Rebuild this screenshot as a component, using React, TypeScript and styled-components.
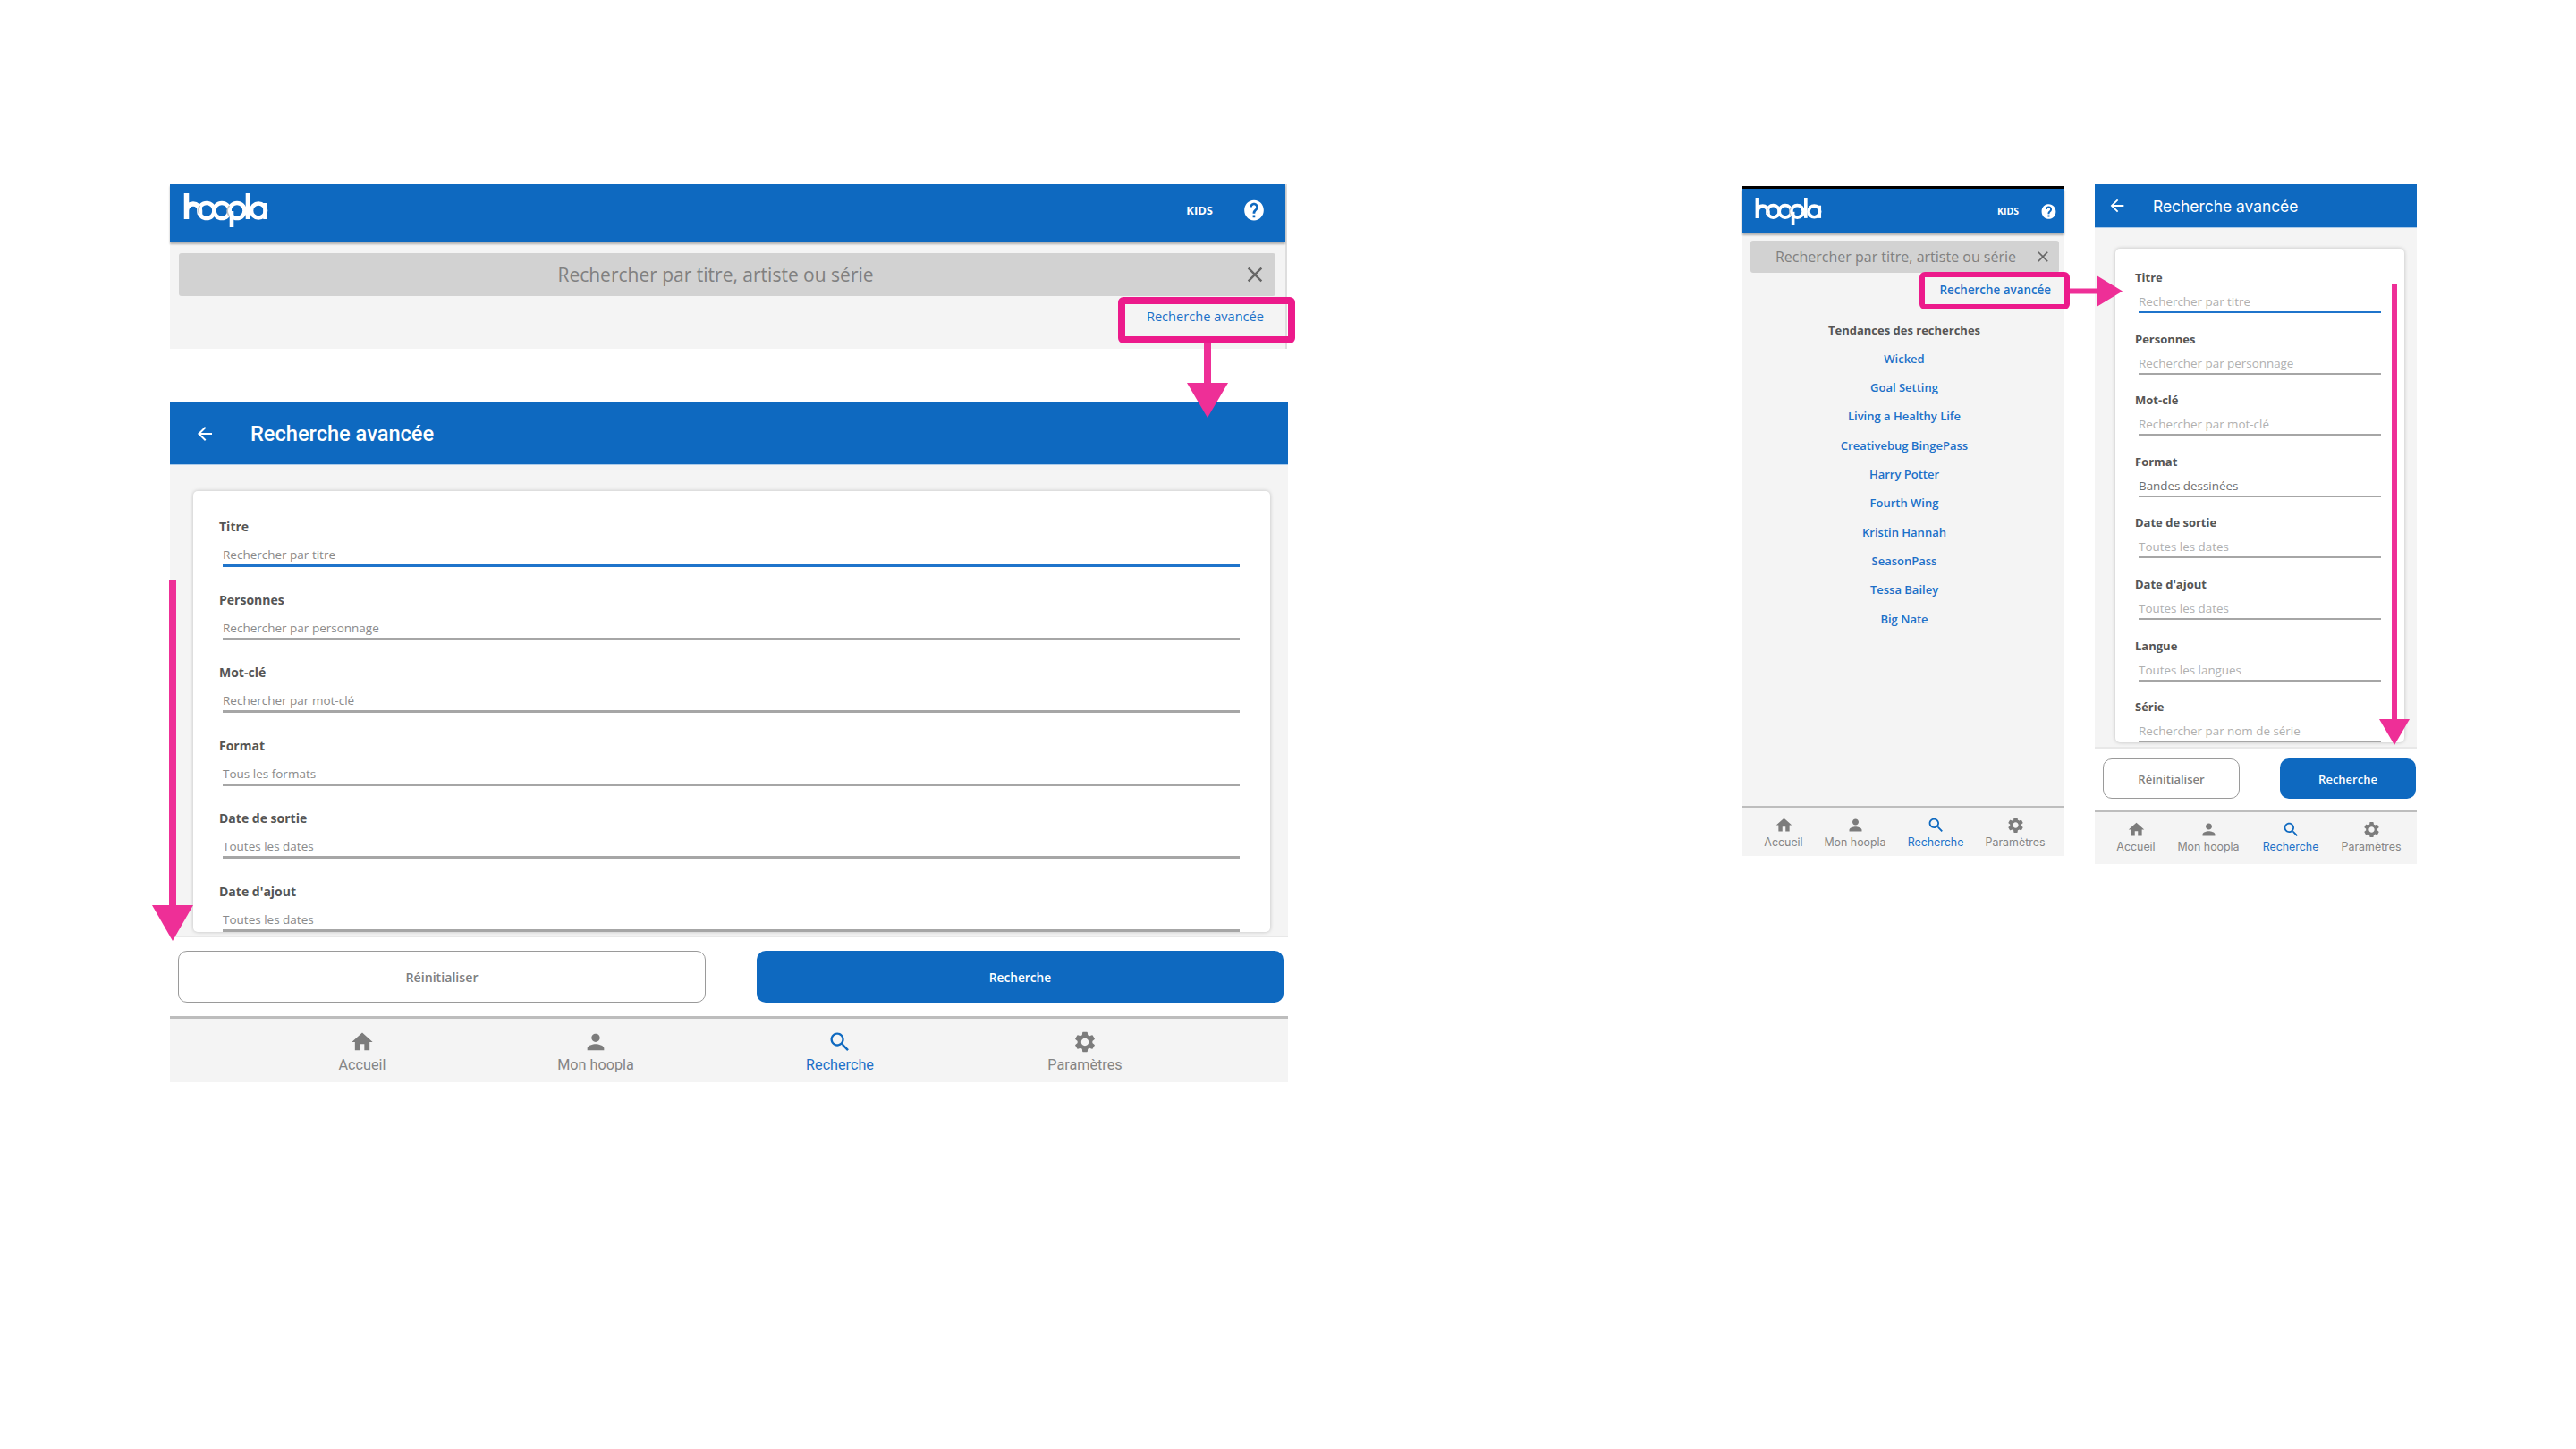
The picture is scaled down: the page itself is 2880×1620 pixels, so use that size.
import React from "react";
import styled, { createGlobalStyle } from "styled-components";

const BLUE = "#0e69c0";
const LINK = "#1c70c8";
const PANEL = "#f4f4f4";
const PINK = "#ee2f97";

const Global = createGlobalStyle`
  html, body { margin: 0; padding: 0; background: #fff; }
  * { box-sizing: border-box; }
`;

const Page = styled.div`
  position: relative;
  width: 2880px;
  height: 1620px;
  overflow: hidden;
  background: #fff;
  padding: 206px 0 0 190px;
  display: flex;
  align-items: flex-start;
  font-family: "Open Sans", "Noto Sans", sans-serif;
`;

const TabletColumn = styled.div`
  width: 1250px;
  display: flex;
  flex-direction: column;
  gap: 60px;
`;

const PhoneGroup = styled.div`
  margin-left: 508px;
  display: flex;
  gap: 34px;
  align-items: flex-start;
`;

/* search screen */
const SearchScreen = styled.section<{ $phone?: boolean }>`
  display: flex;
  flex-direction: column;
  background: ${PANEL};
  width: ${(p) => (p.$phone ? "360px" : "1249px")};
  height: ${(p) => (p.$phone ? "749px" : "184px")};
  margin-top: ${(p) => (p.$phone ? "2px" : "0")};
  border-top: ${(p) => (p.$phone ? "3px solid #000" : "0")};
  border-right: ${(p) => (p.$phone ? "0" : "2px solid #dedede")};
`;

const AppBar = styled.header<{ $phone?: boolean }>`
  display: flex;
  align-items: center;
  flex: none;
  background: ${BLUE};
  height: ${(p) => (p.$phone ? "50px" : "65px")};
  padding: ${(p) => (p.$phone ? "0 8px 0 14px" : "0 22px 8px 15px")};
  box-shadow: 0 2px 2px rgba(0, 0, 0, 0.28);
`;

const Kids = styled.span<{ $phone?: boolean }>`
  margin-left: auto;
  color: #fff;
  font-weight: 700;
  font-size: ${(p) => (p.$phone ? "10.5px" : "13px")};
  margin-right: ${(p) => (p.$phone ? "24px" : "33px")};
`;

const SearchField = styled.div<{ $phone?: boolean }>`
  display: flex;
  align-items: center;
  justify-content: center;
  flex: none;
  background: #d2d2d2;
  color: #808080;
  border-radius: 3px;
  height: ${(p) => (p.$phone ? "36px" : "48px")};
  margin: ${(p) => (p.$phone ? "8px 6px 0 9px" : "12px 11px 0 10px")};
  padding-right: ${(p) => (p.$phone ? "20px" : "26px")};
  position: relative;
  font-size: ${(p) => (p.$phone ? "16px" : "21px")};
`;

const ClearIcon = styled.svg<{ $phone?: boolean }>`
  position: absolute;
  top: 50%;
  transform: translateY(-50%);
  right: ${(p) => (p.$phone ? "8px" : "9px")};
  width: ${(p) => (p.$phone ? "20px" : "28px")};
  height: ${(p) => (p.$phone ? "20px" : "28px")};
  fill: #666;
`;

const AdvancedLink = styled.a<{ $phone?: boolean }>`
  align-self: flex-end;
  color: ${LINK};
  font-weight: ${(p) => (p.$phone ? 600 : 400)};
  font-size: ${(p) => (p.$phone ? "13.4px" : "14.6px")};
  line-height: 20px;
  margin-top: ${(p) => (p.$phone ? "9px" : "12px")};
  margin-right: ${(p) => (p.$phone ? "15px" : "24px")};
`;

const Trending = styled.div`
  flex: 1;
  display: flex;
  flex-direction: column;
  align-items: center;
  padding: 24.5px 0 0 2px;
`;

const TrendingTitle = styled.h3`
  margin: 0;
  font-size: 13px;
  line-height: 20px;
  font-weight: 700;
  color: #555;
`;

const TrendingLink = styled.a`
  color: ${LINK};
  font-weight: 600;
  font-size: 13px;
  line-height: 20px;
  margin-top: 12.33px;
`;

/* advanced screen */
const AdvancedScreen = styled.section<{ $phone?: boolean }>`
  display: flex;
  flex-direction: column;
  background: ${PANEL};
  height: 760px;
  width: ${(p) => (p.$phone ? "360px" : "1250px")};
`;

const TitleBar = styled.header<{ $phone?: boolean }>`
  display: flex;
  align-items: center;
  flex: none;
  background: ${BLUE};
  color: #fff;
  height: ${(p) => (p.$phone ? "49px" : "70px")};
  padding-left: ${(p) => (p.$phone ? "14px" : "27px")};
  gap: ${(p) => (p.$phone ? "29px" : "39px")};
  border-bottom: 1px solid #a9c9e8;
`;

const BackIcon = styled.svg<{ $phone?: boolean }>`
  flex: none;
  fill: #fff;
  width: ${(p) => (p.$phone ? "22px" : "24px")};
  height: ${(p) => (p.$phone ? "22px" : "24px")};
`;

const Title = styled.h2<{ $phone?: boolean }>`
  margin: 0;
  font-family: ${(p) => (p.$phone ? "Inter" : "Roboto")}, sans-serif;
  font-weight: ${(p) => (p.$phone ? 400 : 500)};
  font-size: ${(p) => (p.$phone ? "17.4px" : "23.6px")};
`;

const ScrollArea = styled.div<{ $phone?: boolean }>`
  flex: 1;
  min-height: 0;
  overflow: hidden;
  padding: ${(p) => (p.$phone ? "23px 14px 0 23px" : "29px 20px 0 26px")};
`;

const Card = styled.div<{ $phone?: boolean }>`
  background: #fff;
  border-radius: 5px;
  box-shadow: 0 0 4px rgba(0, 0, 0, 0.22);
  display: flex;
  flex-direction: column;
  padding: ${(p) => (p.$phone ? "24px 26px 0 22px" : "30px 34px 0 29px")};
  gap: ${(p) => (p.$phone ? "20.6px" : "26.55px")};
`;

const FieldLabel = styled.label<{ $phone?: boolean }>`
  display: block;
  font-weight: 700;
  color: #555;
  font-size: ${(p) => (p.$phone ? "13px" : "14px")};
  line-height: ${(p) => (p.$phone ? "16px" : "20px")};
`;

const FieldValue = styled.div<{ $phone?: boolean; $active?: boolean; $filled?: boolean }>`
  margin-left: 4px;
  margin-top: ${(p) => (p.$phone ? "9px" : "10px")};
  height: ${(p) => (p.$phone ? "23px" : "25px")};
  line-height: ${(p) => (p.$phone ? "21px" : "22px")};
  font-size: ${(p) => (p.$phone ? "13.4px" : "13.5px")};
  color: ${(p) => (p.$filled ? "#6e6e6e" : p.$phone ? "#b0b0b0" : "#8a8a8a")};
  border-bottom: ${(p) => (p.$phone ? "2px" : "3px")} solid
    ${(p) => (p.$active ? "#1f74cb" : "#a6a6a6")};
`;

const Footer = styled.div<{ $phone?: boolean }>`
  flex: none;
  display: flex;
  background: #fff;
  border-top: 2px solid #e8e8e8;
  height: ${(p) => (p.$phone ? "71px" : "90px")};
  padding: ${(p) => (p.$phone ? "11px 1px 0 9px" : "15px 5px 0 9px")};
  justify-content: space-between;
`;

const ResetButton = styled.button<{ $phone?: boolean }>`
  font-family: inherit;
  background: #fff;
  color: #808080;
  font-weight: 600;
  font-size: ${(p) => (p.$phone ? "13px" : "14.2px")};
  border: 1.5px solid #9a9a9a;
  border-radius: 10px;
  height: ${(p) => (p.$phone ? "45px" : "58px")};
  width: ${(p) => (p.$phone ? "153px" : "590px")};
`;

const SubmitButton = styled.button<{ $phone?: boolean }>`
  font-family: inherit;
  background: ${BLUE};
  color: #fff;
  font-weight: 600;
  font-size: ${(p) => (p.$phone ? "13px" : "13.7px")};
  border: 0;
  border-radius: 10px;
  height: ${(p) => (p.$phone ? "45px" : "58px")};
  width: ${(p) => (p.$phone ? "152px" : "589px")};
`;

/* bottom nav */
const BottomNav = styled.nav<{ $tracks: string; $phone?: boolean; $height: number; $pad: number }>`
  flex: none;
  display: grid;
  grid-template-columns: ${(p) => p.$tracks};
  background: ${PANEL};
  border-top: ${(p) => (p.$phone ? "2px" : "3px")} solid #bdbdbd;
  height: ${(p) => p.$height}px;
  padding-left: ${(p) => p.$pad}px;
`;

const NavItem = styled.div<{ $active?: boolean; $phone?: boolean }>`
  display: flex;
  flex-direction: column;
  align-items: center;
  white-space: nowrap;
  color: ${(p) => (p.$active ? LINK : "#858585")};
  padding-top: ${(p) => (p.$phone ? "9px" : "12px")};
  font-family: ${(p) => (p.$phone ? "Inter" : "Roboto")}, sans-serif;
  font-size: ${(p) => (p.$phone ? "12.4px" : "16.2px")};
  line-height: ${(p) => (p.$phone ? "18px" : "23px")};
`;

const NavIcon = styled.svg<{ $active?: boolean; $phone?: boolean }>`
  fill: ${(p) => (p.$active ? BLUE : "#7c7c7c")};
  width: ${(p) => (p.$phone ? "21px" : "28px")};
  height: ${(p) => (p.$phone ? "21px" : "28px")};
  flex: none;
`;

/* annotations */
const Highlight = styled.div<{ $x: number; $y: number; $w: number; $h: number; $b: number }>`
  position: absolute;
  left: ${(p) => p.$x}px;
  top: ${(p) => p.$y}px;
  width: ${(p) => p.$w}px;
  height: ${(p) => p.$h}px;
  border: ${(p) => p.$b}px solid #ec1a8b;
  border-radius: 6px;
`;

const ArrowSvg = styled.svg<{ $x: number; $y: number }>`
  position: absolute;
  left: ${(p) => p.$x}px;
  top: ${(p) => p.$y}px;
  fill: ${PINK};
`;

const DownArrow = ({ x, y, w, h, shaft, head }: { x: number; y: number; w: number; h: number; shaft: number; head: number }) => (
  <ArrowSvg $x={x} $y={y} width={w} height={h} viewBox={`0 0 ${w} ${h}`}>
    <rect x={(w - shaft) / 2} y={0} width={shaft} height={h - head + 1} />
    <polygon points={`0,${h - head} ${w},${h - head} ${w / 2},${h}`} />
  </ArrowSvg>
);

const RightArrow = ({ x, y, w, h, shaft, head }: { x: number; y: number; w: number; h: number; shaft: number; head: number }) => (
  <ArrowSvg $x={x} $y={y} width={w} height={h} viewBox={`0 0 ${w} ${h}`}>
    <rect x={0} y={(h - shaft) / 2} width={w - head + 1} height={shaft} />
    <polygon points={`${w - head},0 ${w - head},${h} ${w},${h / 2}`} />
  </ArrowSvg>
);

/* icons */
const P = {
  home: "M10 20v-6h4v6h5v-8h3L12 3 2 12h3v8z",
  person: "M12 12c2.21 0 4-1.79 4-4s-1.79-4-4-4-4 1.79-4 4 1.79 4 4 4zm0 2c-2.67 0-8 1.34-8 4v2h16v-2c0-2.66-5.33-4-8-4z",
  search: "M15.5 14h-.79l-.28-.27C15.41 12.59 16 11.11 16 9.5 16 5.91 13.09 3 9.5 3S3 5.91 3 9.5 5.91 16 9.5 16c1.61 0 3.09-.59 4.23-1.57l.27.28v.79l5 4.99L20.49 19l-4.99-5zm-6 0C7.01 14 5 11.99 5 9.5S7.01 5 9.5 5 14 7.01 14 9.5 11.99 14 9.5 14z",
  settings: "M19.14 12.94c.04-.3.06-.61.06-.94 0-.32-.02-.64-.07-.94l2.03-1.58a.49.49 0 0 0 .12-.61l-1.92-3.32a.488.488 0 0 0-.59-.22l-2.39.96c-.5-.38-1.03-.7-1.62-.94l-.36-2.54a.484.484 0 0 0-.48-.41h-3.84c-.24 0-.43.17-.47.41l-.36 2.54c-.59.24-1.13.57-1.62.94l-2.39-.96c-.22-.08-.47 0-.59.22L2.74 8.87c-.12.21-.08.47.12.61l2.03 1.58c-.05.3-.09.63-.09.94s.02.64.07.94l-2.03 1.58a.49.49 0 0 0-.12.61l1.92 3.32c.12.22.37.29.59.22l2.39-.96c.5.38 1.03.7 1.62.94l.36 2.54c.05.24.24.41.48.41h3.84c.24 0 .44-.17.47-.41l.36-2.54c.59-.24 1.13-.56 1.62-.94l2.39.96c.22.08.47 0 .59-.22l1.92-3.32c.12-.22.07-.47-.12-.61l-2.01-1.58zM12 15.6c-1.98 0-3.6-1.62-3.6-3.6s1.62-3.6 3.6-3.6 3.6 1.62 3.6 3.6-1.62 3.6-3.6 3.6z",
  close: "M19 6.41 17.59 5 12 10.59 6.41 5 5 6.41 10.59 12 5 17.59 6.41 19 12 13.41 17.59 19 19 17.59 13.41 12z",
  back: "M20 11H7.83l5.59-5.59L12 4l-8 8 8 8 1.41-1.41L7.83 13H20v-2z",
  help: "M12 1.5C6.2 1.5 2 6.2 2 12s4.2 10.5 10 10.5S22 17.8 22 12 17.8 1.5 12 1.5zm1.2 18h-2.5V17h2.5v2.500zm2.3-7.900-1 1c-.9.9-1.300 1.600-1.300 2.900h-2.500v-.6c0-1.200.5-2.300 1.300-3.100l1.400-1.400c.4-.4.600-1 .6-1.600 0-1.200-.9-2.100-2-2.100s-2 .9-2 2.100H7.500c0-2.500 2-4.500 4.500-4.500s4.500 2 4.500 4.500c0 1.100-.4 2.100-1 2.800z",
};

const Logo = styled.svg<{ $phone?: boolean }>`
  flex: none;
  width: ${(p) => (p.$phone ? "75px" : "95px")};
  height: ${(p) => (p.$phone ? "30px" : "38px")};
  fill: none;
  stroke: #fff;
  stroke-width: 4.6;
`;

const HooplaLogo = ({ phone }: { phone?: boolean }) => (
  <Logo $phone={phone} viewBox="0 0 95 38" role="img" aria-label="hoopla">
    <path d="M3.500 0V29M3.500 19.500a7.500 7.500 0 0 1 15 0V24" strokeWidth="5.500" />
    <circle cx="26" cy="19.500" r="8.500" />
    <circle cx="43" cy="19.500" r="8.500" />
    <circle cx="60" cy="19.500" r="8.500" />
    <path d="M54 20V38" />
    <path d="M72 0V29" />
    <circle cx="84" cy="19.500" r="8" />
    <path d="M91.500 11V29" />
    <path d="M18.500 14a8.500 8.500 0 0 0-.6 9" stroke="#c4c4c4" strokeWidth="1.600" />
    <path d="M51.500 14a8.500 8.500 0 0 0-.6 11" stroke="#c4c4c4" strokeWidth="1.600" />
  </Logo>
);

const NAV = [
  { label: "Accueil", icon: P.home },
  { label: "Mon hoopla", icon: P.person },
  { label: "Recherche", icon: P.search, active: true },
  { label: "Paramètres", icon: P.settings },
];

const Nav = ({ phone, tracks, height, pad }: { phone?: boolean; tracks: string; height: number; pad: number }) => (
  <BottomNav $phone={phone} $tracks={tracks} $height={height} $pad={pad}>
    {NAV.map((n) => (
      <NavItem key={n.label} $active={n.active} $phone={phone}>
        <NavIcon $active={n.active} $phone={phone} viewBox="0 0 24 24">
          <path d={n.icon} />
        </NavIcon>
        {n.label}
      </NavItem>
    ))}
  </BottomNav>
);

const Bar = ({ phone }: { phone?: boolean }) => (
  <AppBar $phone={phone}>
    <HooplaLogo phone={phone} />
    <Kids $phone={phone}>KIDS</Kids>
    <svg width={phone ? 19 : 26} height={phone ? 19 : 26} viewBox="0 0 24 24" fill="#fff">
      <path d={P.help} />
    </svg>
  </AppBar>
);

const Search = ({ phone }: { phone?: boolean }) => (
  <SearchField $phone={phone}>
    Rechercher par titre, artiste ou série
    <ClearIcon $phone={phone} viewBox="0 0 24 24">
      <path d={P.close} />
    </ClearIcon>
  </SearchField>
);

type F = { label: string; value: string; active?: boolean; filled?: boolean };

const TABLET_FIELDS: F[] = [
  { label: "Titre", value: "Rechercher par titre", active: true },
  { label: "Personnes", value: "Rechercher par personnage" },
  { label: "Mot-clé", value: "Rechercher par mot-clé" },
  { label: "Format", value: "Tous les formats" },
  { label: "Date de sortie", value: "Toutes les dates" },
  { label: "Date d'ajout", value: "Toutes les dates" },
];

const PHONE_FIELDS: F[] = [
  { label: "Titre", value: "Rechercher par titre", active: true },
  { label: "Personnes", value: "Rechercher par personnage" },
  { label: "Mot-clé", value: "Rechercher par mot-clé" },
  { label: "Format", value: "Bandes dessinées", filled: true },
  { label: "Date de sortie", value: "Toutes les dates" },
  { label: "Date d'ajout", value: "Toutes les dates" },
  { label: "Langue", value: "Toutes les langues" },
  { label: "Série", value: "Rechercher par nom de série" },
];

const Advanced = ({ phone, fields, tracks, navHeight, pad }: { phone?: boolean; fields: F[]; tracks: string; navHeight: number; pad: number }) => (
  <AdvancedScreen $phone={phone}>
    <TitleBar $phone={phone}>
      <BackIcon $phone={phone} viewBox="0 0 24 24">
        <path d={P.back} />
      </BackIcon>
      <Title $phone={phone}>Recherche avancée</Title>
    </TitleBar>
    <ScrollArea $phone={phone}>
      <Card $phone={phone}>
        {fields.map((f) => (
          <div key={f.label}>
            <FieldLabel $phone={phone}>{f.label}</FieldLabel>
            <FieldValue $phone={phone} $active={f.active} $filled={f.filled}>
              {f.value}
            </FieldValue>
          </div>
        ))}
      </Card>
    </ScrollArea>
    <Footer $phone={phone}>
      <ResetButton $phone={phone}>Réinitialiser</ResetButton>
      <SubmitButton $phone={phone}>Recherche</SubmitButton>
    </Footer>
    <Nav phone={phone} tracks={tracks} height={navHeight} pad={pad} />
  </AdvancedScreen>
);

const TRENDS = [
  "Wicked",
  "Goal Setting",
  "Living a Healthy Life",
  "Creativebug BingePass",
  "Harry Potter",
  "Fourth Wing",
  "Kristin Hannah",
  "SeasonPass",
  "Tessa Bailey",
  "Big Nate",
];

export default function App() {
  return (
    <Page>
      <Global />
      <TabletColumn>
        <SearchScreen>
          <Bar />
          <Search />
          <AdvancedLink>Recherche avancée</AdvancedLink>
        </SearchScreen>
        <Advanced fields={TABLET_FIELDS} tracks="260px 262px 284px 264px" navHeight={74} pad={85} />
      </TabletColumn>
      <PhoneGroup>
        <SearchScreen $phone>
          <Bar phone />
          <Search phone />
          <AdvancedLink $phone>Recherche avancée</AdvancedLink>
          <Trending>
            <TrendingTitle>Tendances des recherches</TrendingTitle>
            {TRENDS.map((t) => (
              <TrendingLink key={t}>{t}</TrendingLink>
            ))}
          </Trending>
          <Nav phone tracks="92px 68px 112px 66px" height={56} pad={0} />
        </SearchScreen>
        <Advanced phone fields={PHONE_FIELDS} tracks="92px 70px 114px 66px" navHeight={60} pad={0} />
      </PhoneGroup>

      <Highlight $x={1250} $y={332} $w={198} $h={52} $b={8} />
      <DownArrow x={1327} y={384} w={46} h={83} shaft={8} head={39} />
      <DownArrow x={170} y={648} w={46} h={404} shaft={8} head={40} />
      <Highlight $x={2146} $y={304} $w={168} $h={42} $b={6} />
      <RightArrow x={2314} y={308} w={59} h={35} shaft={6} head={29} />
      <DownArrow x={2660} y={318} w={34} h={515} shaft={6} head={29} />
    </Page>
  );
}
